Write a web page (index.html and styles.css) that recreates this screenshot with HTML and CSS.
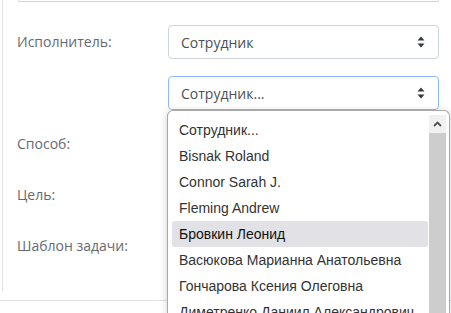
FILE: index.html
```html
<!DOCTYPE html>
<html lang="ru">
<head>
    <meta charset="UTF-8">
    <meta name="viewport" content="width=device-width, initial-scale=1.0">
    <title>Задача</title>
    <link rel="stylesheet" href="styles.css">
</head>
<body>

    <div class="panel">
        <div class="top-field"></div>

        <form class="form">
            <label class="label">Исполнитель:</label>
            <div class="select">
                <span>Сотрудник</span>
                <svg class="caret" width="8" height="12" viewBox="0 0 8 12"><path d="M4 0.5 L7.5 4.5 H0.5 Z M4 11.5 L7.5 7.5 H0.5 Z" fill="#343a40"/></svg>
            </div>

            <span class="label"></span>
            <div class="select focused">
                <span>Сотрудник...</span>
                <svg class="caret" width="8" height="12" viewBox="0 0 8 12"><path d="M4 0.5 L7.5 4.5 H0.5 Z M4 11.5 L7.5 7.5 H0.5 Z" fill="#343a40"/></svg>
            </div>

            <label class="label">Способ:</label>
            <div class="empty"></div>

            <label class="label">Цель:</label>
            <div class="empty"></div>

            <label class="label">Шаблон задачи:</label>
            <div class="empty"></div>
        </form>
    </div>

    <div class="footer"></div>

    <!-- open options of the second select -->
    <div class="dropdown">
        <ul class="options">
            <li>Сотрудник...</li>
            <li>Bisnak Roland</li>
            <li>Connor Sarah J.</li>
            <li>Fleming Andrew</li>
            <li class="hover">Бровкин Леонид</li>
            <li>Васюкова Марианна Анатольевна</li>
            <li>Гончарова Ксения Олеговна</li>
            <li>Диметренко Даниил Александрович</li>
        </ul>
        <div class="scrollbar">
            <div class="scroll-up">
                <svg width="9" height="6" viewBox="0 0 9 6"><path d="M1 5 L4.5 1.5 L8 5" fill="none" stroke="#505050" stroke-width="1.8"/></svg>
            </div>
            <div class="thumb"></div>
        </div>
    </div>

</body>
</html>
```

FILE: styles.css
```css
html {
  font-family: "Open Sans", sans-serif;
}

body {
  margin: 0;
  width: 451px;
  height: 313px;
  overflow: hidden;
  background-color: #fff;
  position: relative;
}

.panel {
  margin-left: 2px;
  border-left: 1px solid #e4e4e4;
  padding: 0 12px 28px 15px;
}

.top-field {
  height: 1px;
  border: 1px solid #ced4da;
  border-top: none;
  border-radius: 0 0 4px 4px;
}

.form {
  display: grid;
  grid-template-columns: 150px 1fr;
  grid-auto-rows: 34px;
  row-gap: 17px;
  margin: 23px 0 0 0;
}

.label {
  font-size: 14px;
  line-height: 34px;
  color: #666a70;
  margin-left: -1px;
}

.select {
  box-sizing: border-box;
  height: 34px;
  border: 1px solid #ced4da;
  border-radius: 4px;
  padding: 0 13px 0 12px;
  display: flex;
  align-items: center;
  justify-content: space-between;
  font-size: 14px;
  color: #495057;
}

.select.focused {
  border-color: #8dbaf0;
}

.footer {
  margin-top: 9px;
  border-top: 1px solid #dee2e6;
}

.dropdown {
  position: absolute;
  left: 167px;
  top: 110px;
  width: 283px;
  height: 203px;
  box-sizing: border-box;
  overflow: hidden;
  background-color: #fff;
  border: 1px solid #a8a8a8;
  border-bottom: none;
  border-radius: 6px 6px 0 0;
  box-shadow: 0 2px 8px rgba(0, 0, 0, 0.18);
  display: flex;
  padding: 0 3px 0 4px;
}

.options {
  list-style: none;
  margin: 0;
  padding: 6px 0 0 0;
  width: 256px;
  font-family: "Liberation Sans", Arial, sans-serif;
  font-size: 14px;
  color: #333;
}

.options li {
  height: 26px;
  line-height: 26px;
  padding-left: 7px;
  white-space: nowrap;
  overflow: hidden;
  border-radius: 3px;
}

.options li.hover {
  background-color: #e1e1e6;
  color: #111;
}

.scrollbar {
  width: 17px;
  margin: 4px 0 0 1px;
  display: flex;
  flex-direction: column;
}

.scroll-up {
  height: 18px;
  background-color: #f1f1f1;
  display: flex;
  align-items: center;
  justify-content: center;
}

.thumb {
  flex: 1;
  background-color: #cdcdcd;
}
```
